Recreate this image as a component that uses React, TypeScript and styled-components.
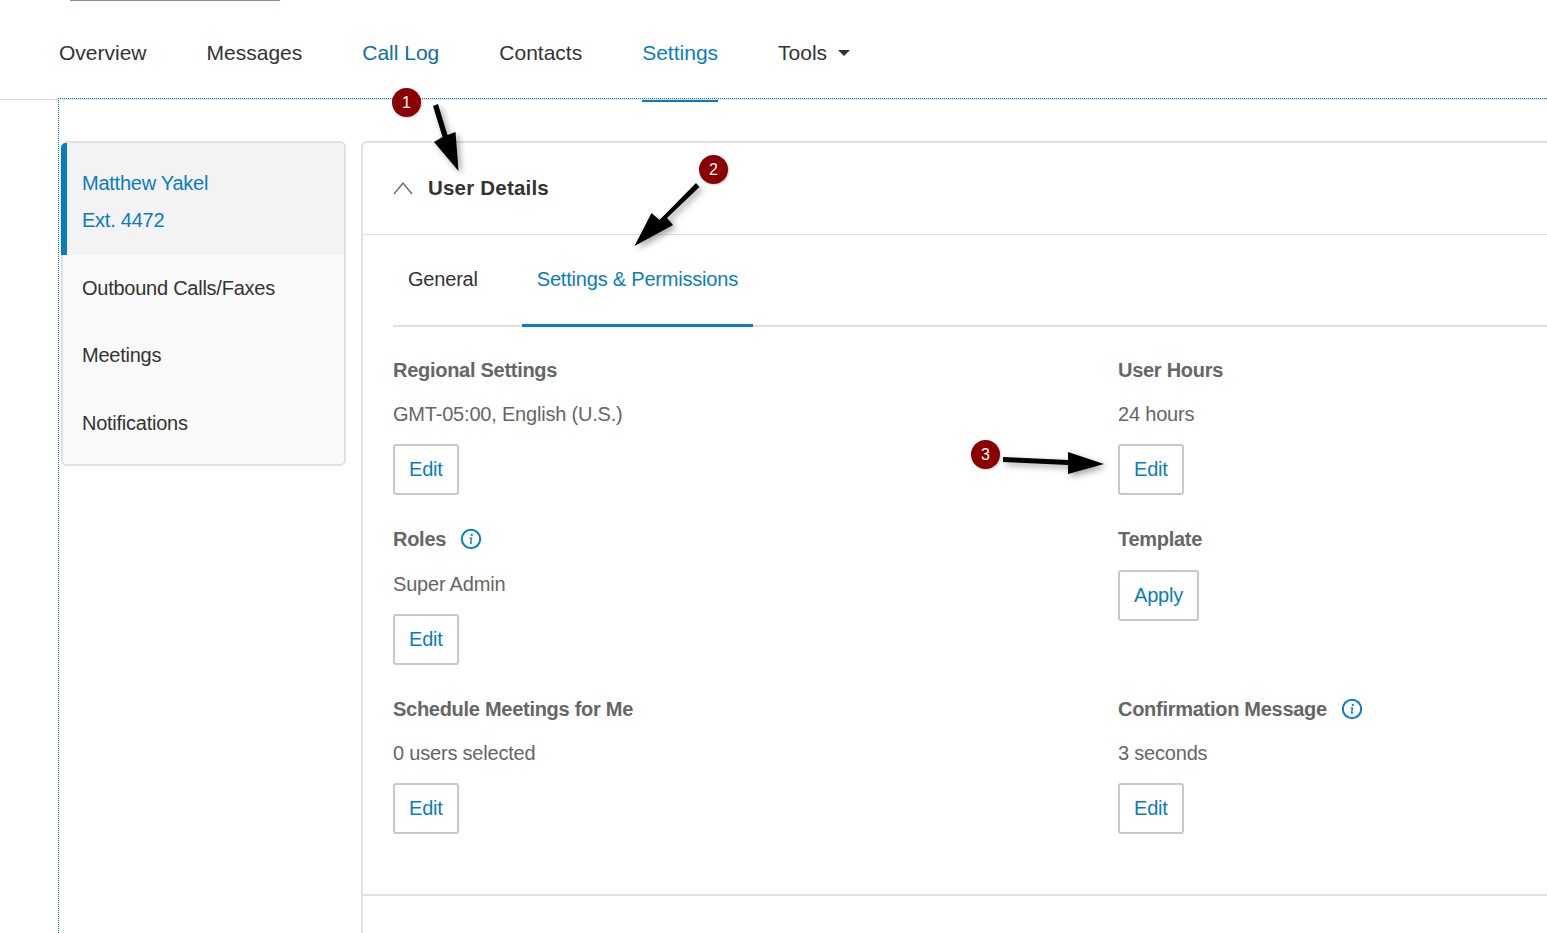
import { createGlobalStyle, styled } from 'styled-components';

const BLUE = '#0a7cc1';

const GlobalStyle = createGlobalStyle`
  html, body {
    margin: 0;
    padding: 0;
    background: #fff;
    font-family: "Liberation Sans", Arial, sans-serif;
  }
  * { box-sizing: border-box; }
`;

const NAV_ITEMS = [
  { label: 'Overview' },
  { label: 'Messages' },
  { label: 'Call Log', tint: true },
  { label: 'Contacts' },
  { label: 'Settings', active: true },
  { label: 'Tools', caret: true },
];

const USER_MENU = ['Outbound Calls/Faxes', 'Meetings', 'Notifications'];

function InfoIcon() {
  return (
    <InfoSvg viewBox="0 0 22 22" aria-hidden="true">
      <circle cx="11" cy="11" r="9.2" fill="none" stroke={BLUE} strokeWidth="2" />
      <circle cx="11.8" cy="6.9" r="1.1" fill={BLUE} />
      <path d="M9.6 10.1h2l-1.1 4.6c-.1.5.3.6.6.4l.9-.7" fill="none" stroke={BLUE} strokeWidth="1.3" />
    </InfoSvg>
  );
}

function Field({
  title,
  value,
  action = 'Edit',
  info,
  loose,
}: {
  title: string;
  value?: string;
  action?: string;
  info?: boolean;
  loose?: boolean;
}) {
  return (
    <div>
      <FieldTitle>
        {title}
        {info && <InfoIcon />}
      </FieldTitle>
      {value && <FieldValue $loose={loose}>{value}</FieldValue>}
      <ActionButton $tight={!value}>{action}</ActionButton>
    </div>
  );
}

export default function App() {
  return (
    <Page>
      <GlobalStyle />
      <Header>
        <LogoEdge />
        <NavList>
          {NAV_ITEMS.map(item => (
            <NavItem key={item.label} $tint={item.tint} $active={item.active}>
              {item.label}
              {item.caret && <Caret />}
            </NavItem>
          ))}
        </NavList>
      </Header>

      <Main>
        <Sidebar>
          <SidebarActive>
            <div>Matthew Yakel</div>
            <div>Ext. 4472</div>
          </SidebarActive>
          {USER_MENU.map(label => (
            <SidebarItem key={label}>{label}</SidebarItem>
          ))}
        </Sidebar>

        <Panel>
          <PanelHeader>
            <svg width="20" height="14" viewBox="0 0 20 14" aria-hidden="true">
              <path d="M1 13L10 2l9 11" fill="none" stroke="#666" strokeWidth="1.4" />
            </svg>
            <PanelTitle>User Details</PanelTitle>
          </PanelHeader>

          <PanelBody>
            <Tabs>
              <Tab>General</Tab>
              <Tab $active>Settings &amp; Permissions</Tab>
            </Tabs>
            <FieldGrid>
              <Field title="Regional Settings" value="GMT-05:00, English (U.S.)" />
              <Field title="User Hours" value="24 hours" />
              <Field title="Roles" value="Super Admin" info loose />
              <Field title="Template" action="Apply" />
              <Field title="Schedule Meetings for Me" value="0 users selected" />
              <Field title="Confirmation Message" value="3 seconds" info />
            </FieldGrid>
          </PanelBody>
        </Panel>
      </Main>

      <Annotations viewBox="0 0 1547 933" aria-hidden="true">
        <path d="M433 106l5-2 9.500 31 8-3 3 39-24.500-29 8.500-5z" />
        <path d="M696 183l3.500 4-32.500 31 6 7-38.500 21 17-33 8 7z" />
        <path d="M1003 457l65 3v-8l36 12-36 10v-9l-65-3z" />
      </Annotations>
      <Badge $x={392} $y={88}>1</Badge>
      <Badge $x={699} $y={155}>2</Badge>
      <Badge $x={971} $y={440}>3</Badge>
    </Page>
  );
}

const Page = styled.div`
  position: relative;
  width: 1547px;
  height: 933px;
  overflow: hidden;
  color: #333;
`;

const Header = styled.header`
  height: 100px;
  border-bottom: 1px solid #e0e0e0;
`;

const LogoEdge = styled.div`
  width: 210px;
  height: 1px;
  margin-left: 70px;
  background: #8d86b8;
`;

const NavList = styled.nav`
  display: flex;
  gap: 60px;
  padding: 36px 0 0 59px;
`;

const NavItem = styled.div<{ $tint?: boolean; $active?: boolean }>`
  position: relative;
  display: flex;
  align-items: center;
  height: 32px;
  font-size: 21px;
  color: ${p => (p.$active ? BLUE : p.$tint ? '#0f6ea8' : '#333')};

  &::after {
    content: '';
    display: ${p => (p.$active ? 'block' : 'none')};
    position: absolute;
    left: 0;
    right: 0;
    top: 63px;
    height: 2px;
    background: ${BLUE};
  }
`;

const Caret = styled.span`
  width: 0;
  height: 0;
  margin-left: 11px;
  border-left: 6px solid transparent;
  border-right: 6px solid transparent;
  border-top: 6px solid #333;
`;

const Main = styled.main`
  display: flex;
  align-items: flex-start;
  gap: 15px;
  height: 835px;
  margin: -2px 0 0 58px;
  padding: 42px 0 0 2px;
  border-top: 1px dotted ${BLUE};
  border-left: 1px dotted ${BLUE};
`;

const Sidebar = styled.aside`
  flex: none;
  width: 285px;
  padding-bottom: 7px;
  border: 2px solid #e0e0e0;
  border-radius: 6px;
  background: #fafafa;
  font-size: 20px;
  letter-spacing: -0.25px;
`;

const SidebarActive = styled.div`
  height: 112px;
  margin-left: -2px;
  padding: 22px 0 0 15px;
  line-height: 37px;
  border-left: 6px solid ${BLUE};
  border-top-left-radius: 5px;
  border-top-right-radius: 4px;
  background: #f3f3f3;
  color: ${BLUE};
`;

const SidebarItem = styled.div`
  height: 67.25px;
  padding-left: 19px;
  line-height: 66px;
`;

const Panel = styled.section`
  flex: 1;
  height: 793px;
  border-top: 2px solid #e0e0e0;
  border-left: 2px solid #e0e0e0;
  border-top-left-radius: 6px;
`;

const PanelHeader = styled.div`
  display: flex;
  align-items: center;
  gap: 15px;
  height: 92px;
  padding: 0 0 1px 30px;
  border-bottom: 1px solid #e0e0e0;
`;

const PanelTitle = styled.h2`
  margin: 0;
  font-size: 20.5px;
  font-weight: 700;
  letter-spacing: 0.2px;
  color: #333;
`;

const PanelBody = styled.div`
  height: 661px;
  padding: 0 0 0 30px;
  border-bottom: 2px solid #e0e0e0;
`;

const Tabs = styled.div`
  display: flex;
  gap: 29px;
  height: 92px;
  border-bottom: 2px solid #e0e0e0;
`;

const Tab = styled.div<{ $active?: boolean }>`
  height: 92px;
  padding: 0 15px;
  line-height: 88px;
  font-size: 20px;
  letter-spacing: -0.2px;
  color: ${p => (p.$active ? BLUE : '#333')};
  border-bottom: 3px solid ${p => (p.$active ? BLUE : 'transparent')};
`;

const FieldGrid = styled.div`
  display: grid;
  grid-template-columns: 725px 1fr;
  row-gap: 29px;
  padding-top: 28px;
`;

const FieldTitle = styled.div`
  display: flex;
  align-items: center;
  height: 30px;
  font-size: 20px;
  font-weight: 700;
  letter-spacing: -0.28px;
  color: #666;
`;

const InfoSvg = styled.svg`
  width: 22px;
  height: 22px;
  margin-left: 14px;
`;

const FieldValue = styled.div<{ $loose?: boolean }>`
  height: 30px;
  margin-top: ${p => (p.$loose ? 15 : 14)}px;
  line-height: 30px;
  font-size: 20px;
  letter-spacing: -0.2px;
  color: #666;
`;

const ActionButton = styled.button<{ $tight?: boolean }>`
  display: block;
  height: 51px;
  margin-top: ${p => (p.$tight ? 16 : 15)}px;
  padding: 0 14px;
  border: 2px solid #c8c8c8;
  border-radius: 3px;
  background: #fff;
  font: inherit;
  font-size: 20px;
  letter-spacing: -0.2px;
  color: ${BLUE};
`;

const Annotations = styled.svg`
  position: absolute;
  top: 0;
  left: 0;
  width: 1547px;
  height: 933px;
  pointer-events: none;
  fill: #000;
  filter: drop-shadow(3px 3px 3px rgba(0, 0, 0, 0.35));
`;

const Badge = styled.div<{ $x: number; $y: number }>`
  position: absolute;
  left: ${p => p.$x}px;
  top: ${p => p.$y}px;
  width: 29px;
  height: 29px;
  border-radius: 50%;
  background: #8a0000;
  color: #fff;
  font-size: 16px;
  line-height: 29px;
  text-align: center;
  box-shadow: 1px 1px 2px rgba(0, 0, 0, 0.2);
`;
